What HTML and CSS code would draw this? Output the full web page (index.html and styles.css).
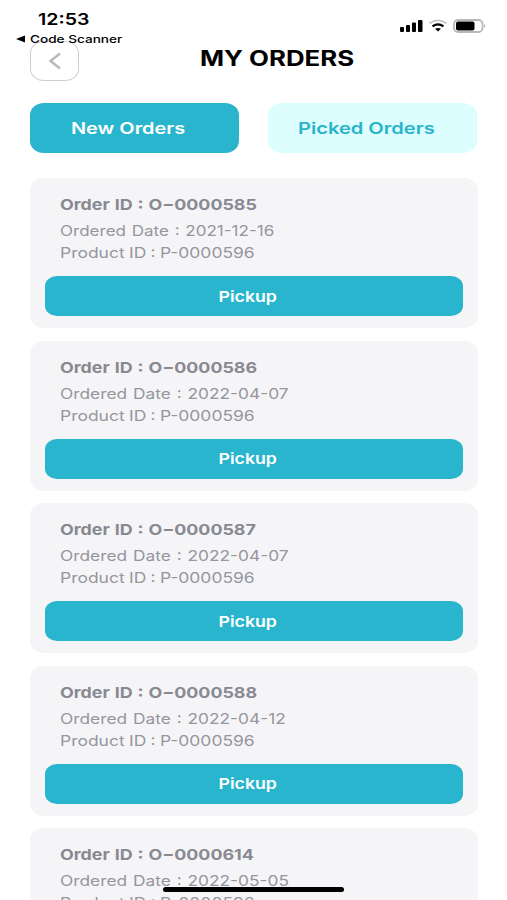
FILE: index.html
```html
<!DOCTYPE html>
<html lang="en">
<head>
<meta charset="utf-8">
<title>My Orders</title>
<link rel="stylesheet" href="styles.css">
</head>
<body>
<div class="screen">
  <header class="top">
    <div class="status">
      <span class="clock"><span class="wide">12:53</span></span>
      <svg class="indicators" width="88" height="16" viewBox="0 0 88 16">
        <rect x="1" y="9" width="4" height="5" rx="1"/>
        <rect x="7" y="7" width="4" height="7" rx="1"/>
        <rect x="13" y="4.500" width="4" height="9.500" rx="1"/>
        <rect x="19" y="2" width="4.500" height="12" rx="1"/>
        <path d="M30.500 5.500Q39 -.8 47.500 5.500" fill="none" stroke="#c8c8c8" stroke-width="1.800"/>
        <path d="M33.500 8.400Q39 4.400 44.500 8.400" fill="none" stroke="#000" stroke-width="2.200"/>
        <path d="M36 10.800Q39 9 42 10.800L39 13.400Z"/>
        <rect x="55" y="2" width="28.500" height="12" rx="4" fill="#fff" stroke="#b9b9b9" stroke-width="1.800"/>
        <rect x="57" y="3.600" width="18.500" height="8.800" rx="2"/>
        <path d="M85 6Q87.500 8 85 10Z" fill="#aaa"/>
      </svg>
    </div>
    <div class="return"><svg width="9" height="8" viewBox="0 0 9 8"><path d="M0 4L9 .4V7.600Z"/></svg><span class="wide">Code Scanner</span></div>
    <div class="nav">
      <button class="back" aria-label="Back"><svg width="14" height="18" viewBox="0 0 14 18"><path d="M12 1.500L2.500 9L12 16.500" fill="none" stroke="#b8b8b8" stroke-width="2.400"/></svg></button>
      <h1><span class="wide">MY ORDERS</span></h1>
    </div>
  </header>
  <nav class="tabs">
    <button class="tab active"><span class="wide">New Orders</span></button>
    <button class="tab"><span class="wide">Picked Orders</span></button>
  </nav>
  <main class="orders">
    <article class="card"><h2><span class="wide">Order ID : O−0000585</span></h2><p class="date narrow"><span class="wide">Ordered Date : 2021-12-16</span></p><p class="product"><span class="wide">Product ID : P-0000596</span></p><button class="pickup"><span class="wide">Pickup</span></button></article>
    <article class="card"><h2><span class="wide">Order ID : O−0000586</span></h2><p class="date"><span class="wide">Ordered Date : 2022-04-07</span></p><p class="product"><span class="wide">Product ID : P-0000596</span></p><button class="pickup"><span class="wide">Pickup</span></button></article>
    <article class="card"><h2><span class="wide">Order ID : O−0000587</span></h2><p class="date"><span class="wide">Ordered Date : 2022-04-07</span></p><p class="product"><span class="wide">Product ID : P-0000596</span></p><button class="pickup"><span class="wide">Pickup</span></button></article>
    <article class="card"><h2><span class="wide">Order ID : O−0000588</span></h2><p class="date"><span class="wide">Ordered Date : 2022-04-12</span></p><p class="product"><span class="wide">Product ID : P-0000596</span></p><button class="pickup"><span class="wide">Pickup</span></button></article>
    <article class="card"><h2><span class="wide">Order ID : O−0000614</span></h2><p class="date"><span class="wide">Ordered Date : 2022-05-05</span></p><p class="product"><span class="wide">Product ID : P-0000596</span></p><button class="pickup"><span class="wide">Pickup</span></button></article>
  </main>
  <div class="home-bar"></div>
</div>
</body>
</html>
```
FILE: styles.css
```css
* { box-sizing: border-box; margin: 0; padding: 0; }
body { background: #fff; font-family: Inter, "Liberation Sans", sans-serif; }
button { border: 0; font-family: inherit; }
svg { display: block; }
.screen { position: relative; width: 507px; height: 900px; overflow: hidden; }
/* Letterforms are widened horizontally without growing in height. */
.wide { display: inline-block; white-space: nowrap; transform: scaleX(var(--stretch, 1.25)); transform-origin: left center; }
.top { height: 103.400px; padding-top: 9px; }
.status { display: flex; justify-content: space-between; height: 20px; padding: 0 20px 0 38px; }
.clock { font-size: 16px; line-height: 20px; font-weight: 600; --stretch: 1.220; }
.indicators { margin-top: 9px; }
.return { position: relative; z-index: 1; display: flex; align-items: center; gap: 5px; height: 20px; padding-left: 16px; font-size: 11px; font-weight: 500; --stretch: 1.235; }
.nav { display: flex; margin-top: -8px; padding-left: 30px; }
.back { display: grid; place-items: center; width: 49px; height: 40px; border: 1.500px solid #cfcfcf; border-radius: 14px / 12px; background: #fff; }
.nav h1 { margin: 4px 0 0 121px; font-size: 21px; line-height: 28px; font-weight: 700; --stretch: 1.230; }
.tabs { display: grid; grid-template-columns: 209px 209px; gap: 29px; margin-left: 30px; }
.tab { height: 50px; padding: 0 0 1px 30px; border-radius: 14px / 12px; background: #dcfefe; color: #29b4cc; font-size: 16px; font-weight: 600; text-align: left; --stretch: 1.255; }
.tab.active { background: #28b5cd; color: #fff; padding-left: 41px; --stretch: 1.245; }
.orders { display: grid; gap: 12.500px; margin: 25px 30px 0; }
.card { width: 447.500px; height: 150px; padding: 16px 14.500px 0 15px; border-radius: 14px / 12px; background: #f5f5f8; }
.card h2 { padding-left: 14.500px; color: #898991; font-size: 15px; line-height: 22px; font-weight: 700; word-spacing: .6px; --stretch: 1.190; }
.card p { padding-left: 14.500px; color: #96969d; font-size: 14.500px; line-height: 22px; --stretch: 1.2; }
.card .date { margin-top: 4px; word-spacing: .8px; --stretch: 1.195; }
.card .narrow { --stretch: 1.175; }
.card .product { word-spacing: -.5px; --stretch: 1.205; }
.pickup { display: block; width: 100%; height: 40px; margin-top: 12px; padding-right: 12px; border-radius: 12px / 10px; background: #28b5cd; color: #fff; font-size: 15px; font-weight: 600; --stretch: 1.180; }
.pickup .wide { transform-origin: center; }
.home-bar { position: absolute; left: 163px; top: 887px; width: 181px; height: 5px; border-radius: 3px; background: #000; }
```
